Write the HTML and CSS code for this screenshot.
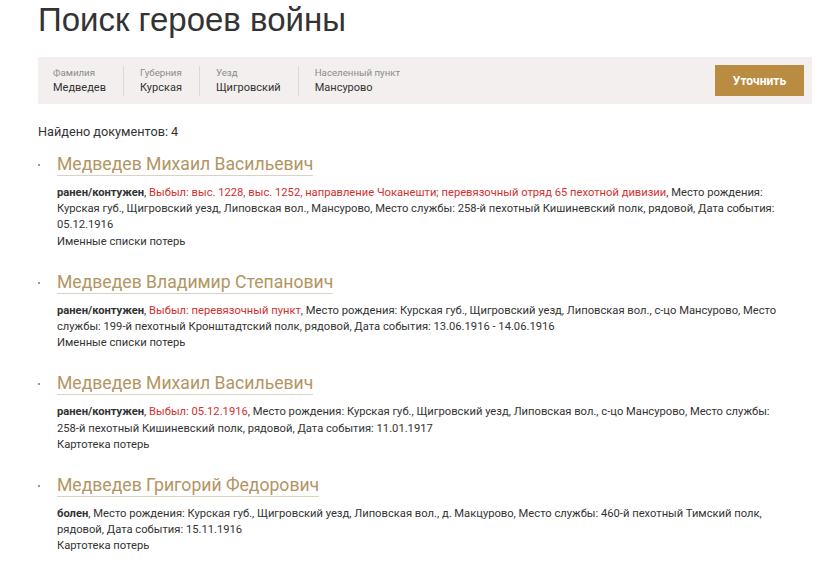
FILE: index.html
```html
<!DOCTYPE html>
<html lang="ru">
<head>
<meta charset="utf-8">
<link rel="stylesheet" href="styles.css">
</head>
<body>
<div class="page">
  <h1 class="title">Поиск героев войны</h1>
  <div class="filter">
    <div class="fields">
      <div class="field"><div class="label">Фамилия</div><div class="value">Медведев</div></div>
      <div class="field"><div class="label">Губерния</div><div class="value">Курская</div></div>
      <div class="field"><div class="label">Уезд</div><div class="value">Щигровский</div></div>
      <div class="field"><div class="label">Населенный пункт</div><div class="value">Мансурово</div></div>
    </div>
    <button class="btn">Уточнить</button>
  </div>
  <div class="found">Найдено документов: 4</div>
  <ul class="results">
    <li class="item">
      <a class="name" href="#">Медведев Михаил Васильевич</a>
      <div class="desc"><b>ранен/контужен</b>, <span class="red">Выбыл: выс. 1228, выс. 1252, направление Чоканешти; перевязочный отряд 65 пехотной дивизии</span>, Место рождения: Курская губ., Щигровский уезд, Липовская вол., Мансурово, Место службы: 258-й пехотный Кишиневский полк, рядовой, Дата события: 05.12.1916</div>
      <div class="src">Именные списки потерь</div>
    </li>
    <li class="item">
      <a class="name" href="#">Медведев Владимир Степанович</a>
      <div class="desc"><b>ранен/контужен</b>, <span class="red">Выбыл: перевязочный пункт</span>, Место рождения: Курская губ., Щигровский уезд, Липовская вол., с-цо Мансурово, Место службы: 199-й пехотный Кронштадтский полк, рядовой, Дата события: 13.06.1916 - 14.06.1916</div>
      <div class="src">Именные списки потерь</div>
    </li>
    <li class="item">
      <a class="name" href="#">Медведев Михаил Васильевич</a>
      <div class="desc"><b>ранен/контужен</b>, <span class="red">Выбыл: 05.12.1916</span>, Место рождения: Курская губ., Щигровский уезд, Липовская вол., с-цо Мансурово, Место службы: 258-й пехотный Кишиневский полк, рядовой, Дата события: 11.01.1917</div>
      <div class="src">Картотека потерь</div>
    </li>
    <li class="item">
      <a class="name" href="#">Медведев Григорий Федорович</a>
      <div class="desc"><b>болен</b>, Место рождения: Курская губ., Щигровский уезд, Липовская вол., д. Макцурово, Место службы: 460-й пехотный Тимский полк, рядовой, Дата события: 15.11.1916</div>
      <div class="src">Картотека потерь</div>
    </li>
  </ul>
</div>
</body>
</html>
```

FILE: styles.css
```css
html, body {
  margin: 0;
  padding: 0;
  background: #fff;
}
body {
  font-family: Roboto, "Liberation Sans", sans-serif;
  color: #333;
}
.page {
  padding: 0 12px 0 38px;
}
.title {
  font-family: "Liberation Sans", Arial, sans-serif;
  font-weight: normal;
  font-size: 33px;
  line-height: 40px;
  margin: 0;
  color: #333;
}
.filter {
  margin-top: 17px;
  background: #f2efee;
  height: 47px;
  display: flex;
  align-items: center;
  justify-content: space-between;
  padding: 0 8px 0 15px;
}
.fields {
  display: flex;
  align-items: stretch;
}
.field {
  padding: 0 17px 0 16px;
  border-left: 1px solid #dcd8d6;
  height: 30px;
  display: flex;
  flex-direction: column;
  justify-content: center;
}
.field:first-child {
  border-left: none;
  padding-left: 0;
}
.label {
  font-size: 9.7px;
  line-height: 13px;
  color: #8b8b8b;
}
.value {
  font-size: 11px;
  line-height: 16px;
  margin-top: 1px;
  color: #333;
}
.btn {
  background: #b98c42;
  color: #fff;
  border: none;
  font-family: Roboto, "Liberation Sans", sans-serif;
  font-weight: bold;
  font-size: 12px;
  width: 89px;
  height: 31px;
  padding: 0;
}
.found {
  margin-top: 20px;
  font-size: 12.7px;
  line-height: 16px;
}
.results {
  list-style: none;
  margin: 14px 0 0;
  padding: 0;
}
.item {
  position: relative;
  padding-left: 19px;
  margin-bottom: 22px;
}
.item::before {
  content: "";
  position: absolute;
  left: 0;
  top: 10px;
  width: 2px;
  height: 2px;
  background: #999;
}
.name {
  display: inline-block;
  font-size: 17.6px;
  line-height: 20px;
  color: #b39563;
  text-decoration: none;
  border-bottom: 1px solid #ddd2bf;
  padding-bottom: 1px;
}
.desc {
  max-width: 722px;
  margin-top: 9px;
  font-size: 11.2px;
  line-height: 16.2px;
  color: #333;
}
.desc b {
  font-weight: bold;
}
.red {
  color: #d32f2f;
}
.src {
  font-size: 11.2px;
  line-height: 16.2px;
}
```
